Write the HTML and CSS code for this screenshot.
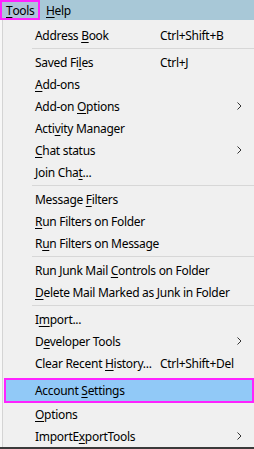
FILE: index.html
```html
<!DOCTYPE html>
<html lang="en">
<head>
<meta charset="UTF-8">
<meta name="viewport" content="width=device-width, initial-scale=1.0">
<title>Tools menu</title>
<link rel="stylesheet" href="styles.css">
</head>
<body>
<div class="menubar">
    <span class="menubar-item open"><u>T</u>ools</span>
    <span class="menubar-item"><u>H</u>elp</span>
</div>
<div class="menu">
    <div class="menu-item"><span class="label">Address <u>B</u>ook</span><span class="shortcut">Ctrl+Shift+B</span></div>
    <div class="separator"></div>
    <div class="menu-item"><span class="label">Saved Fi<u>l</u>es</span><span class="shortcut">Ctrl+J</span></div>
    <div class="menu-item"><span class="label"><u>A</u>dd-ons</span></div>
    <div class="menu-item"><span class="label">Add-on <u>O</u>ptions</span><span class="arrow"><svg viewBox="0 0 5 8"><polyline points="0.5,0.5 4,4 0.5,7.5"/></svg></span></div>
    <div class="menu-item"><span class="label">Acti<u>v</u>ity Manager</span></div>
    <div class="menu-item"><span class="label"><u>C</u>hat status</span><span class="arrow"><svg viewBox="0 0 5 8"><polyline points="0.5,0.5 4,4 0.5,7.5"/></svg></span></div>
    <div class="menu-item"><span class="label">Join Cha<u>t</u>...</span></div>
    <div class="separator"></div>
    <div class="menu-item"><span class="label">Message <u>F</u>ilters</span></div>
    <div class="menu-item"><span class="label"><u>R</u>un Filters on Folder</span></div>
    <div class="menu-item"><span class="label">R<u>u</u>n Filters on Message</span></div>
    <div class="separator"></div>
    <div class="menu-item"><span class="label">Run Junk Mail <u>C</u>ontrols on Folder</span></div>
    <div class="menu-item"><span class="label"><u>D</u>elete Mail Marked as Junk in Folder</span></div>
    <div class="separator"></div>
    <div class="menu-item"><span class="label">I<u>m</u>port...</span></div>
    <div class="menu-item"><span class="label">D<u>e</u>veloper Tools</span><span class="arrow"><svg viewBox="0 0 5 8"><polyline points="0.5,0.5 4,4 0.5,7.5"/></svg></span></div>
    <div class="menu-item"><span class="label">Clear Recent <u>H</u>istory...</span><span class="shortcut">Ctrl+Shift+Del</span></div>
    <div class="menu-item selected"><span class="label">Account <u>S</u>ettings</span></div>
    <div class="menu-item"><span class="label"><u>O</u>ptions</span></div>
    <div class="menu-item"><span class="label">ImportE<u>x</u>portTools</span><span class="arrow"><svg viewBox="0 0 5 8"><polyline points="0.5,0.5 4,4 0.5,7.5"/></svg></span></div>
</div>
</body>
</html>
```

FILE: styles.css
```css
* {
    margin: 0;
    padding: 0;
    box-sizing: border-box;
}

body {
    width: 254px;
    height: 449px;
    overflow: hidden;
    background-color: #f7f7f7;
    font-family: 'Noto Sans', 'Open Sans', sans-serif;
    font-size: 12px;
    letter-spacing: -0.3px;
    color: #000;
    border-bottom: 2px solid #3a3a3a;
}

u {
    text-decoration: underline;
    text-underline-offset: 2px;
}

.menubar {
    height: 20px;
    background-color: #a8c8d7;
    display: flex;
    align-items: stretch;
}

.menubar-item {
    display: flex;
    align-items: center;
    padding: 0 6px;
}

.menubar-item.open {
    width: 40px;
    padding-left: 4px;
    background-color: #afc3da;
    border: 2px solid #ff22ff;
}

.menu {
    margin-left: 2px;
    height: 427px;
    background-color: #f0f0f0;
    border-left: 1px solid #d4d4d4;
    padding-top: 4px;
    display: flex;
    flex-direction: column;
}

.menu-item {
    height: 22px;
    display: grid;
    grid-template-columns: 125px 1fr 14px;
    align-items: center;
    padding-left: 32px;
    padding-right: 8px;
    white-space: nowrap;
}

.menu-item .shortcut {
    grid-column: 2;
}

.menu-item .arrow {
    grid-column: 3;
    display: flex;
    align-items: center;
}

.arrow svg {
    width: 5px;
    height: 8px;
    margin-left: 5px;
    fill: none;
    stroke: #333;
    stroke-width: 1;
}

.menu-item.selected {
    height: 25px;
    margin: 4px 0 0 1px;
    padding-left: 29px;
    background-color: #91c9f7;
    border: 2px solid #ff22ff;
}

.separator {
    height: 5px;
    margin-left: 29px;
    display: flex;
    align-items: center;
}

.separator::after {
    content: "";
    flex: 1;
    height: 1px;
    background-color: #d7d7d7;
}
```
